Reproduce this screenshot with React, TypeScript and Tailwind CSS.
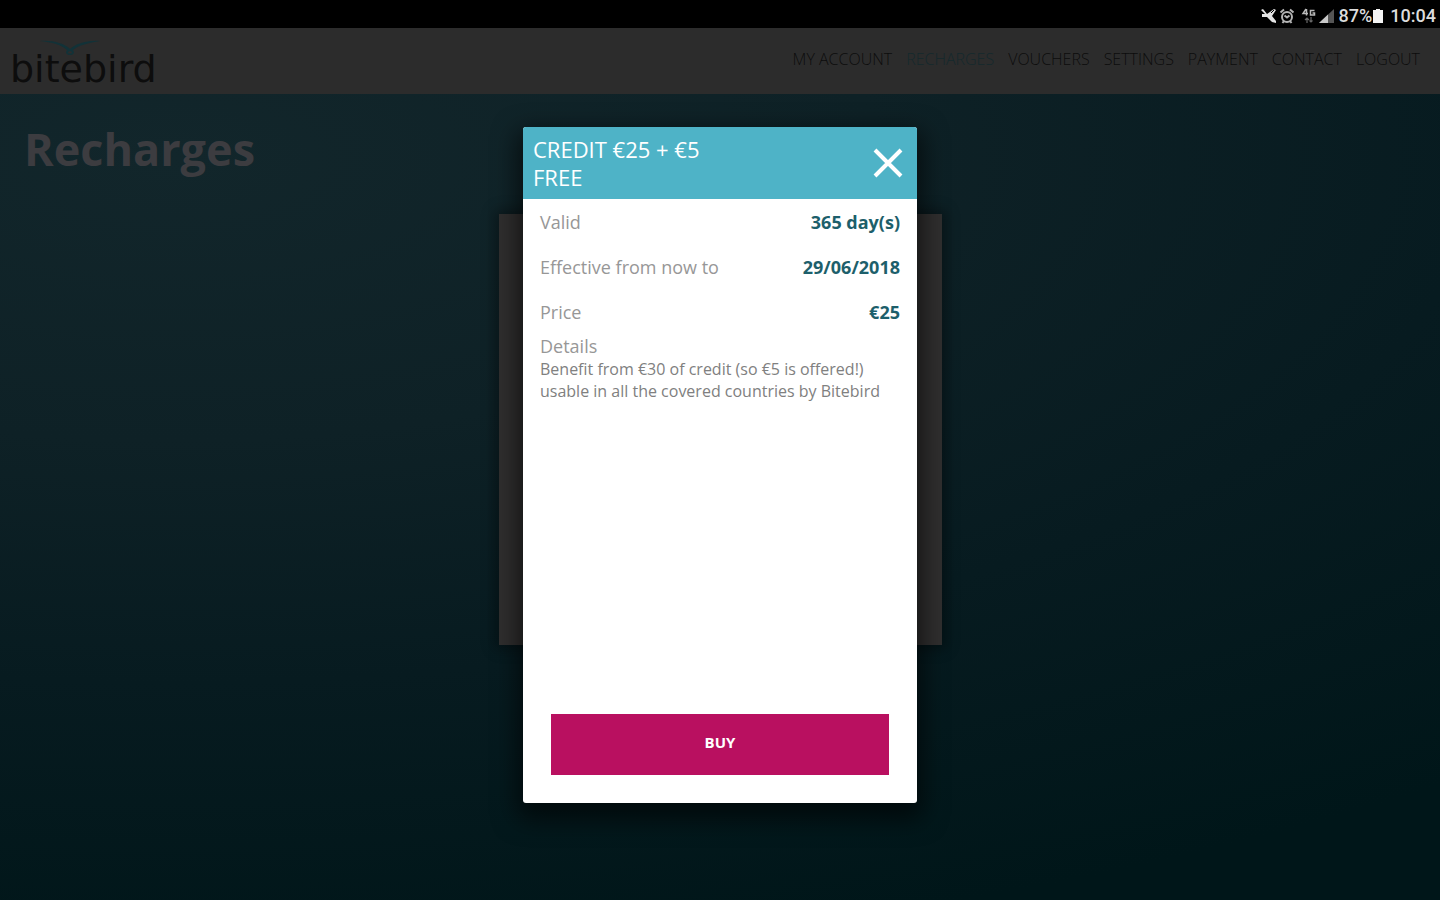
import React from "react";

const NAV = ["MY ACCOUNT", "RECHARGES", "VOUCHERS", "SETTINGS", "PAYMENT", "CONTACT", "LOGOUT"];

const ROWS = [
  { label: "Valid", value: "365 day(s)" },
  { label: "Effective from now to", value: "29/06/2018" },
  { label: "Price", value: "€25" },
];

function StatusBar() {
  return (
    <div className="flex h-7 shrink-0 items-center justify-end bg-black pr-1 pt-1 font-['Roboto',sans-serif] text-[18px] font-medium leading-5 text-[#dcdcdc]">
      <svg viewBox="0 0 16 16" className="mr-0.5 size-4" aria-hidden="true">
        <path d="M0 2l2-1 4 5 7-5 2 1-4 6 4 5v2l-4-1-5-5H1V6h3z" fill="#e4e4e4" />
        <path d="M10 5l3-3" stroke="#000" strokeWidth="1" />
      </svg>
      <svg viewBox="0 0 16 16" className="mr-1.5 size-4" fill="none" stroke="#b4b4b4" strokeWidth="2" aria-hidden="true">
        <circle cx="8" cy="9" r="5" />
        <path d="M1.500 4.500L5 1.500M14.500 4.500L11 1.500M5.500 7.500L8 9.500l2.500-2M3.500 15l1.500-2M12.500 15L11 13" />
      </svg>
      <svg viewBox="0 0 16 16" className="mr-0.5 size-4" aria-hidden="true">
        <path d="M5 1L2 5.500h5M5.500 1v6.500M13.500 2.500h-4v4.500h4v-2h-2" fill="none" stroke="#b8b8b8" strokeWidth="1.500" />
        <path d="M6 15V10M4 12l2-2 2 2M10 9v5M8.500 12.500l1.500 1.500 1.500-1.500" fill="none" stroke="#6a6a6a" strokeWidth="1.200" />
      </svg>
      <svg viewBox="0 0 16 16" className="mr-1 size-4" aria-hidden="true">
        <path d="M0 15L15 1v14z" fill="#555" />
        <path d="M0 15L9 6.500V15z" fill="#c8c8c8" />
      </svg>
      <span>87%</span>
      <svg viewBox="0 0 12 16" className="mr-1.5 h-4 w-3" aria-hidden="true">
        <path d="M4 1h4v1h3v13H1V2h3z" fill="#f4f4f4" />
      </svg>
      <span>10:04</span>
    </div>
  );
}

function Logo() {
  return (
    <a href="#home" className="relative block pt-4 font-['DejaVu_Sans',sans-serif] text-[38px] leading-[44px] text-[#0d0d0d]">
      bitebird
      <svg viewBox="0 0 64 18" className="absolute left-7 top-2 h-[18px] w-16" fill="none" aria-hidden="true">
        <path d="M2 2C14 1 26 4 32 10C38 5 48 1 62 2C50 4 41 6 35 11L36 13A4 3 0 1 1 28 13L29 11C24 6 14 3 2 2ZM30 13a2 1.500 0 1 0 4 0L32 12Z" fill="#123238" fillRule="evenodd" />
      </svg>
    </a>
  );
}

function Dialog() {
  return (
    <section
      role="dialog"
      aria-labelledby="offer-title"
      className="flex min-h-[676px] w-[394px] max-w-full flex-col overflow-hidden rounded-[3px] bg-white shadow-[0_10px_24px_6px_rgba(0,0,0,0.6)]"
    >
      <header className="flex items-center justify-between bg-[#4eb3c7] py-2 pl-[10px] pr-3 text-white">
        <h2 id="offer-title" className="w-[220px] text-[22px] leading-7">
          CREDIT €25 + €5 FREE
        </h2>
        <button type="button" aria-label="Close" className="p-0.5">
          <svg viewBox="0 0 30 30" className="size-[30px]" aria-hidden="true">
            <path d="M2 2L28 28M28 2L2 28" stroke="#fff" strokeWidth="4" />
          </svg>
        </button>
      </header>
      <div className="flex flex-1 flex-col px-[17px]">
        <dl>
          {ROWS.map((row) => (
            <div key={row.label} className="flex h-[45px] items-center justify-between text-[18px] leading-6">
              <dt className="text-[#979797]">{row.label}</dt>
              <dd className="font-bold text-[#1d5f6b]">{row.value}</dd>
            </div>
          ))}
        </dl>
        <h3 className="text-[18px] leading-6 text-[#979797]">Details</h3>
        <p className="text-[16px] leading-[22px] text-[#808080]">
          Benefit from €30 of credit (so €5 is offered!) usable in all the covered countries by Bitebird
        </p>
      </div>
      <div className="px-7 pb-7">
        <button type="button" className="h-[61px] w-full bg-[#b91060] pb-1 text-[15px] font-bold text-white">
          BUY
        </button>
      </div>
    </section>
  );
}

export default function App() {
  return (
    <div className="flex min-h-screen flex-col bg-[#001416] font-['Open_Sans',sans-serif]">
      <StatusBar />
      <div className="relative flex flex-1 flex-col">
        <header className="flex h-[66px] shrink-0 items-center justify-between bg-[#2c2c2c] pl-[10px] pr-5">
          <Logo />
          <nav className="flex gap-[14px] pb-1 text-[16px] font-light leading-6">
            {NAV.map((item) => (
              <a
                key={item}
                href={"#" + item.toLowerCase().replace(" ", "-")}
                className={item === "RECHARGES" ? "text-[#14292d]" : "text-[#0c0c0c]"}
              >
                {item}
              </a>
            ))}
          </nav>
        </header>
        <main className="flex flex-1 flex-col bg-[radial-gradient(ellipse_140%_100%_at_12%_8%,#12262b_0%,#0e2126_35%,#071b20_65%,#001619_100%)] px-6 pt-[26px]">
          <h1 className="text-[45px] font-bold leading-[58px] text-[#3c3c40]">Recharges</h1>
          <div className="mx-auto mt-9 h-[431px] w-full max-w-[443px] bg-[#302f2f] shadow-[0_0_12px_4px_rgba(0,0,0,0.35)]" />
        </main>
        <div className="absolute inset-0 flex items-center justify-center pt-0.5">
          <Dialog />
        </div>
      </div>
    </div>
  );
}
